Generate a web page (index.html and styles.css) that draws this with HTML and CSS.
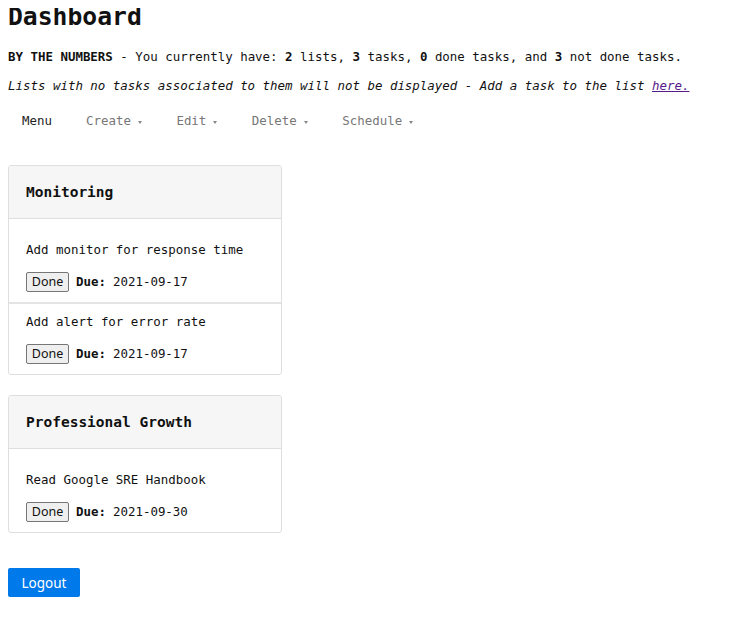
FILE: index.html
```html
<!DOCTYPE html>
<html>
<head>
<meta charset="utf-8">
<link rel="stylesheet" href="styles.css">
</head>
<body>
<h1 class="title">Dashboard</h1>
<p class="stats"><b>BY THE NUMBERS</b> - You currently have: <b>2</b> lists, <b>3</b> tasks, <b>0</b> done tasks, and <b>3</b> not done tasks.</p>
<p class="note">Lists with no tasks associated to them will not be displayed - Add a task to the list <a href="#" class="link">here.</a></p>
<nav class="menu">
  <span class="menu-item active">Menu</span>
  <span class="menu-item">Create<span class="caret"></span></span>
  <span class="menu-item">Edit<span class="caret"></span></span>
  <span class="menu-item">Delete<span class="caret"></span></span>
  <span class="menu-item">Schedule<span class="caret"></span></span>
</nav>
<div class="lists">
  <div class="card">
    <div class="card-header">Monitoring</div>
    <div class="card-body">
      <div class="task">
        <div class="task-name">Add monitor for response time</div>
        <div class="task-meta"><button class="btn-done">Done</button> <b>Due:</b> 2021-09-17</div>
      </div>
      <div class="task">
        <div class="task-name">Add alert for error rate</div>
        <div class="task-meta"><button class="btn-done">Done</button> <b>Due:</b> 2021-09-17</div>
      </div>
    </div>
  </div>
  <div class="card">
    <div class="card-header">Professional Growth</div>
    <div class="card-body">
      <div class="task">
        <div class="task-name">Read Google SRE Handbook</div>
        <div class="task-meta"><button class="btn-done">Done</button> <b>Due:</b> 2021-09-30</div>
      </div>
    </div>
  </div>
</div>
<button class="btn-logout">Logout</button>
</body>
</html>
```
FILE: styles.css
```css
body {
  margin: 8px;
  font-family: "DejaVu Sans Mono", monospace;
  font-size: 12.45px;
  color: #111;
  background: #fff;
}
.title {
  font-size: 24.7px;
  font-weight: bold;
  margin: -2px 0 21px 0;
  line-height: 22px;
}
.stats {
  margin: 0 0 13px 0;
  line-height: 16px;
}
.note {
  margin: 0 0 10px 0;
  font-style: italic;
  line-height: 16px;
}
.link {
  color: #551a8b;
}
.menu {
  display: flex;
  gap: 34px;
  padding: 9px 14px 8px;
  color: #777;
  margin-bottom: 28px;
  line-height: 16px;
}
.menu-item {
  display: flex;
  align-items: center;
}
.menu-item.active {
  color: #222;
}
.caret {
  display: inline-block;
  width: 0;
  height: 0;
  margin-left: 7px;
  margin-right: 0.5px;
  margin-top: 3px;
  border-top: 3px solid #888;
  border-left: 2px solid transparent;
  border-right: 2px solid transparent;
}
.lists {
  display: flex;
  flex-direction: column;
  gap: 20px;
  width: 274px;
}
.card {
  border: 1px solid #dedede;
  border-radius: 3px;
}
.card-header {
  background: #f6f6f6;
  border-bottom: 1px solid #dedede;
  padding: 17px 17px;
  font-size: 14.5px;
  font-weight: bold;
  line-height: 18px;
  border-radius: 3px 3px 0 0;
}
.card-body {
  padding-top: 13px;
}
.task {
  padding: 10px 17px 10px 17px;
}
.task + .task {
  border-top: 2px solid #e4e4e4;
}
.task-name {
  line-height: 16px;
  margin-bottom: 14px;
}
.task-meta {
  display: flex;
  align-items: center;
  gap: 7px;
  line-height: 20px;
}
.btn-done {
  font-family: "Noto Sans", sans-serif;
  font-size: 12.5px;
  height: 20px;
  width: 43px;
  padding: 0;
  border: 1px solid #767676;
  border-radius: 2px;
  background: #efefef;
  color: #111;
  line-height: 18px;
}
.btn-logout {
  margin-top: 35px;
  display: block;
  background: #0079ea;
  color: #fff;
  border: none;
  border-radius: 2px;
  width: 72px;
  height: 29px;
  font-family: "Noto Sans", sans-serif;
  font-size: 13.5px;
  padding: 0;
}
```
